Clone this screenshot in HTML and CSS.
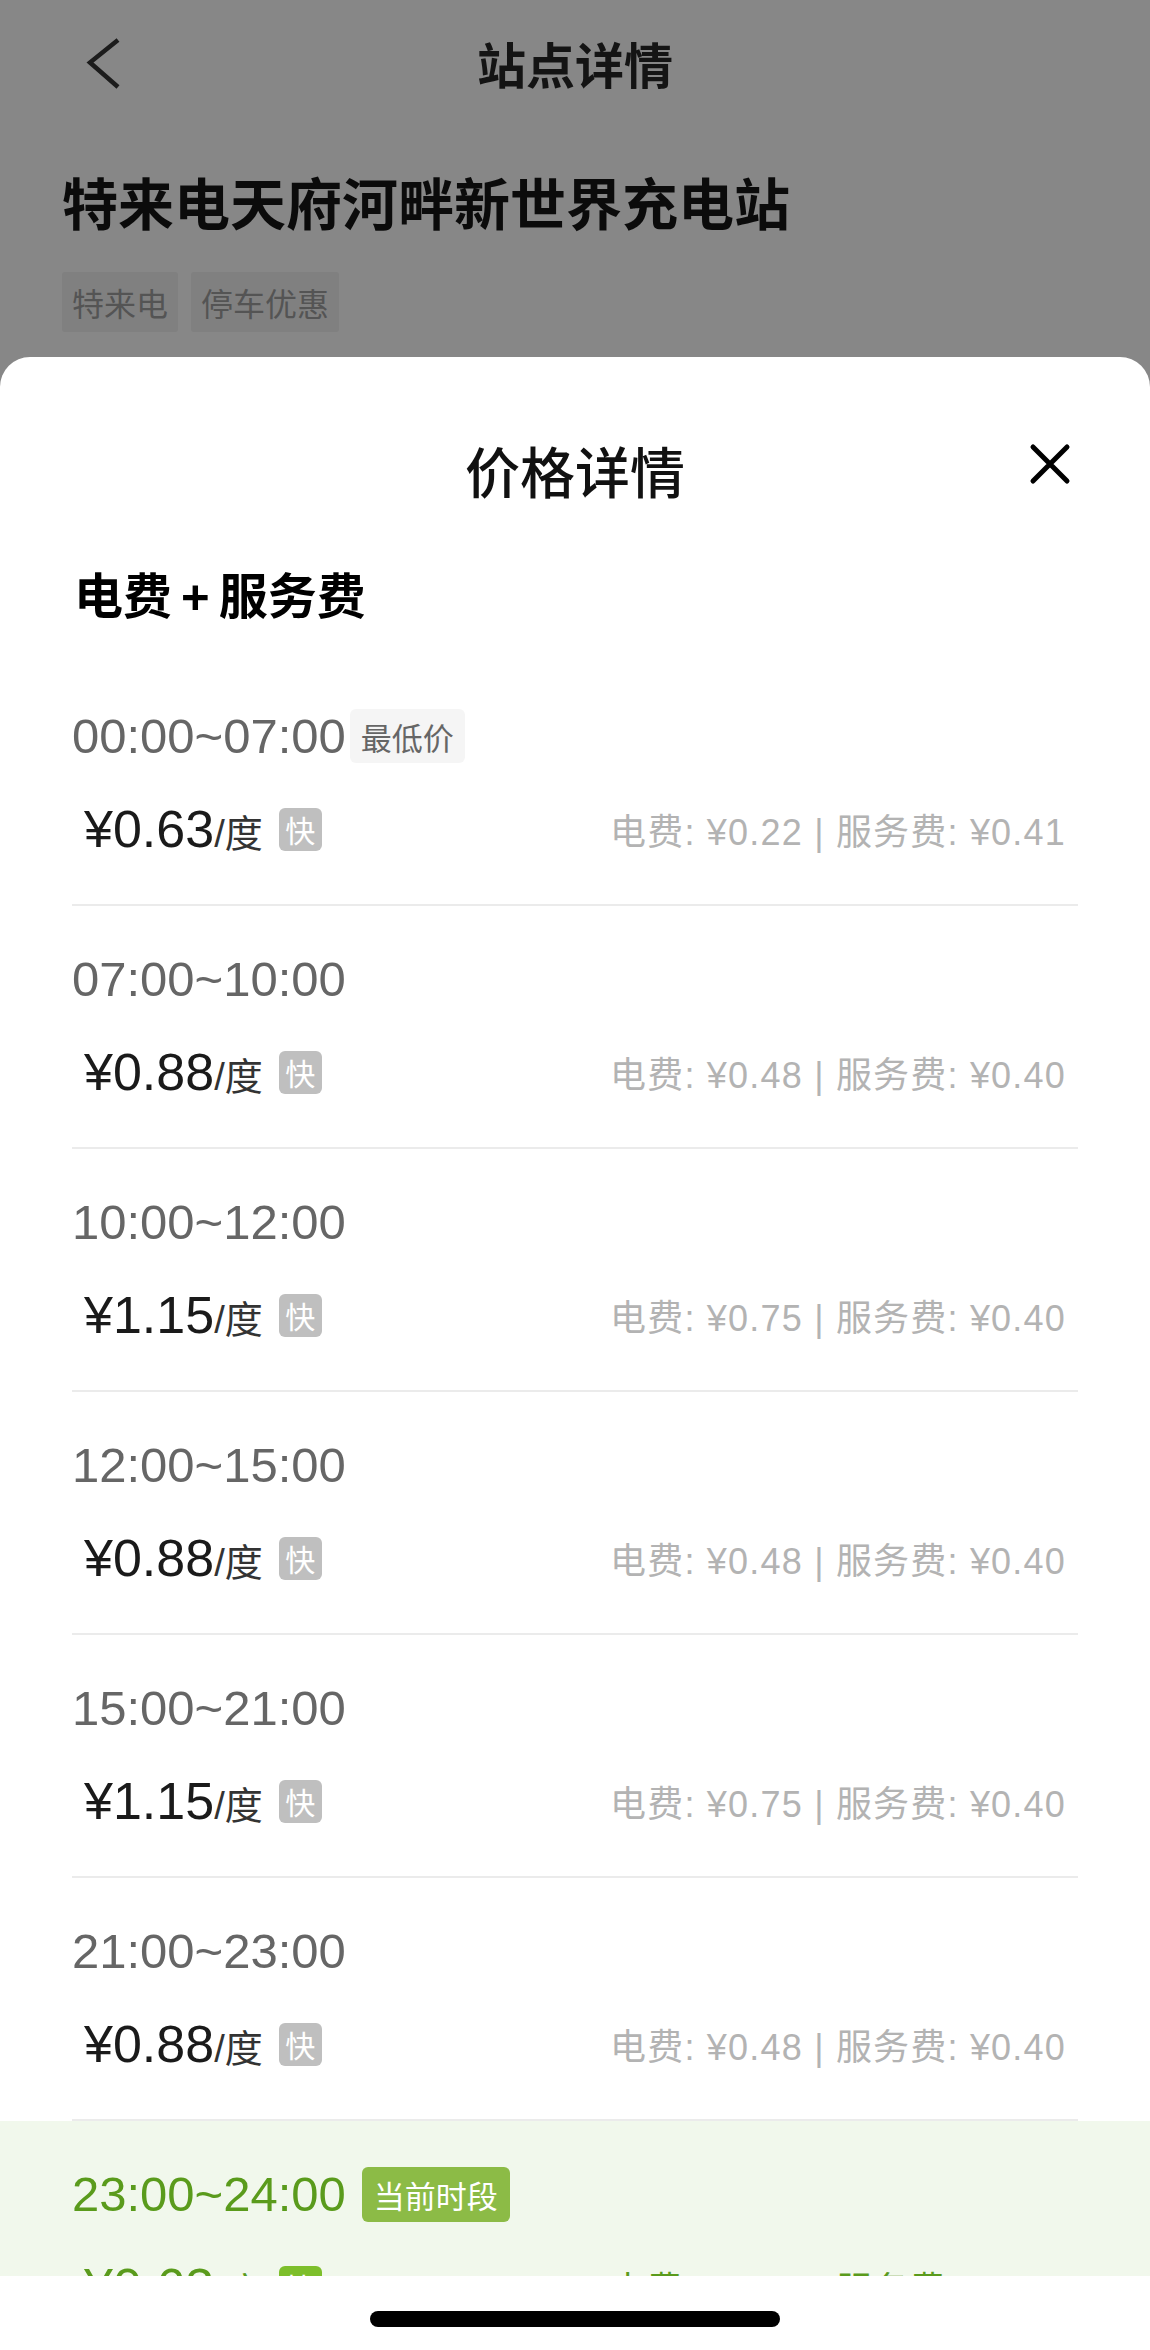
FILE: index.html
```html
<!DOCTYPE html>
<html lang="zh-CN">
<head>
    <meta charset="UTF-8">
    <meta name="viewport" content="width=device-width, initial-scale=1.0">
    <title>价格详情</title>
    <link rel="stylesheet" href="styles.css">
</head>
<body>
    <div class="page">
        <header class="station">
            <div class="nav">
                <span class="nav-back">
                    <svg width="40" height="56" viewBox="0 0 40 56"><polyline points="34,5 6,27.5 34,52" fill="none" stroke="#1c1c1c" stroke-width="4.5" stroke-linejoin="miter"/></svg>
                </span>
                <h1 class="nav-title">站点详情</h1>
                <span></span>
            </div>
            <h2 class="station-name">特来电天府河畔新世界充电站</h2>
            <div class="station-tags">
                <span class="station-tag">特来电</span>
                <span class="station-tag">停车优惠</span>
            </div>
        </header>

        <section class="sheet">
            <div class="sheet-head">
                <span></span>
                <h3 class="sheet-title">价格详情</h3>
                <button type="button" class="sheet-close">
                    <svg width="44" height="44" viewBox="0 0 44 44"><path d="M5 5 L39 39 M39 5 L5 39" stroke="#000" stroke-width="5" stroke-linecap="round"/></svg>
                </button>
            </div>
            <h4 class="fee-heading">电费<span class="plus">+</span>服务费</h4>

            <ul class="slots">
                <li class="slot">
                    <div class="slot-inner">
                        <div class="slot-time">00:00~07:00<span class="tag-low">最低价</span></div>
                        <div class="slot-price">
                            <div class="price"><span class="price-num">¥0.63</span><span class="price-unit">/度</span><span class="badge-fast">快</span></div>
                            <div class="price-detail">电费: ¥0.22 | 服务费: ¥0.41</div>
                        </div>
                    </div>
                </li>
                <li class="slot">
                    <div class="slot-inner">
                        <div class="slot-time">07:00~10:00</div>
                        <div class="slot-price">
                            <div class="price"><span class="price-num">¥0.88</span><span class="price-unit">/度</span><span class="badge-fast">快</span></div>
                            <div class="price-detail">电费: ¥0.48 | 服务费: ¥0.40</div>
                        </div>
                    </div>
                </li>
                <li class="slot">
                    <div class="slot-inner">
                        <div class="slot-time">10:00~12:00</div>
                        <div class="slot-price">
                            <div class="price"><span class="price-num">¥1.15</span><span class="price-unit">/度</span><span class="badge-fast">快</span></div>
                            <div class="price-detail">电费: ¥0.75 | 服务费: ¥0.40</div>
                        </div>
                    </div>
                </li>
                <li class="slot">
                    <div class="slot-inner">
                        <div class="slot-time">12:00~15:00</div>
                        <div class="slot-price">
                            <div class="price"><span class="price-num">¥0.88</span><span class="price-unit">/度</span><span class="badge-fast">快</span></div>
                            <div class="price-detail">电费: ¥0.48 | 服务费: ¥0.40</div>
                        </div>
                    </div>
                </li>
                <li class="slot">
                    <div class="slot-inner">
                        <div class="slot-time">15:00~21:00</div>
                        <div class="slot-price">
                            <div class="price"><span class="price-num">¥1.15</span><span class="price-unit">/度</span><span class="badge-fast">快</span></div>
                            <div class="price-detail">电费: ¥0.75 | 服务费: ¥0.40</div>
                        </div>
                    </div>
                </li>
                <li class="slot">
                    <div class="slot-inner">
                        <div class="slot-time">21:00~23:00</div>
                        <div class="slot-price">
                            <div class="price"><span class="price-num">¥0.88</span><span class="price-unit">/度</span><span class="badge-fast">快</span></div>
                            <div class="price-detail">电费: ¥0.48 | 服务费: ¥0.40</div>
                        </div>
                    </div>
                </li>
                <li class="slot slot-current">
                    <div class="slot-inner">
                        <div class="slot-time">23:00~24:00<span class="tag-current">当前时段</span></div>
                        <div class="slot-price">
                            <div class="price"><span class="price-num">¥0.63</span><span class="price-unit">/度</span><span class="badge-fast">快</span></div>
                            <div class="price-detail">电费: ¥0.22 | 服务费: ¥0.41</div>
                        </div>
                    </div>
                </li>
            </ul>

            <div class="home-bar"><span class="home-indicator"></span></div>
        </section>
    </div>
</body>
</html>
```

FILE: styles.css
```css
/* Reset */
* {
    margin: 0;
    padding: 0;
    box-sizing: border-box;
}

body {
    font-family: "Liberation Sans", "Noto Sans CJK SC", sans-serif;
    background: #878787;
    color: #111;
}

.page {
    width: 1150px;
    height: 2350px;
    overflow: hidden;
    display: flex;
    flex-direction: column;
}

/* Station header (dimmed behind the sheet) */
.station {
    height: 357px;
    flex: none;
}

.nav {
    height: 130px;
    padding-bottom: 4px;
    display: grid;
    grid-template-columns: 1fr auto 1fr;
    align-items: center;
}

.nav-back {
    padding-left: 84px;
    display: flex;
    align-items: center;
}

.nav-title {
    font-family: "Noto Sans CJK SC", sans-serif;
    font-size: 49px;
    font-weight: 600;
    color: #141414;
    line-height: 60px;
}

.station-name {
    margin: 36px 0 0 62px;
    font-family: "Noto Sans CJK SC", sans-serif;
    font-size: 56px;
    font-weight: 700;
    line-height: 70px;
    color: #0b0b0b;
}

.station-tags {
    display: flex;
    gap: 13px;
    margin: 36px 0 0 62px;
}

.station-tag {
    height: 60px;
    padding: 0 10px;
    display: flex;
    align-items: center;
    background: #808080;
    border-radius: 3px;
    font-family: "Noto Sans CJK SC", sans-serif;
    font-size: 32px;
    color: #545454;
}

/* Bottom sheet */
.sheet {
    flex: 1;
    min-height: 0;
    background: #fff;
    border-radius: 30px 30px 0 0;
    display: flex;
    flex-direction: column;
}

.sheet-head {
    padding-top: 82px;
    display: grid;
    grid-template-columns: 1fr auto 1fr;
    align-items: center;
}

.sheet-title {
    font-family: "Noto Sans CJK SC", sans-serif;
    font-size: 55px;
    font-weight: 500;
    line-height: 60px;
    color: #111;
}

.sheet-close {
    justify-self: end;
    align-self: start;
    margin: 3px 78px 0 0;
    width: 44px;
    height: 44px;
    border: none;
    background: none;
    display: flex;
}

.fee-heading {
    margin: 64px 0 0 74px;
    font-family: "Noto Sans CJK SC", sans-serif;
    font-size: 49px;
    font-weight: 700;
    line-height: 60px;
    color: #000;
}

.plus {
    font-family: "Liberation Sans", sans-serif;
    margin: 0 9px;
}

/* Time slots */
.slots {
    list-style: none;
    margin-top: 36px;
    flex: 1;
    min-height: 0;
    overflow: hidden;
}

.slot {
    padding: 0 72px;
}

.slot-inner {
    padding: 46px 0 48px;
    border-bottom: 2px solid #ebebeb;
}

.slot-time {
    height: 54px;
    display: flex;
    align-items: center;
    font-size: 49px;
    color: #666;
}

.tag-low {
    margin-left: 4px;
    height: 54px;
    padding: 0 11px;
    display: flex;
    align-items: center;
    background: #f5f5f5;
    border-radius: 6px;
    font-family: "Noto Sans CJK SC", sans-serif;
    font-size: 31px;
    color: #666;
}

.slot-price {
    margin-top: 39px;
    height: 54px;
    padding: 0 12px;
    display: flex;
    align-items: center;
    justify-content: space-between;
}

.price {
    display: flex;
    align-items: baseline;
}

.price-num {
    font-size: 52px;
    font-weight: 500;
    color: #1a1a1a;
}

.price-unit {
    font-size: 38px;
    color: #333;
}

.badge-fast {
    align-self: center;
    margin-left: 16px;
    width: 43px;
    height: 43px;
    display: flex;
    align-items: center;
    justify-content: center;
    background: #bfbfbf;
    border-radius: 6px;
    font-family: "Noto Sans CJK SC", sans-serif;
    font-size: 30px;
    color: #fff;
}

.price-detail {
    font-size: 36px;
    letter-spacing: 1.2px;
    color: #b3b3b3;
}

/* Current slot highlight */
.slot-current {
    background: #f1f8ec;
}

.slot-current .slot-time,
.slot-current .price-num,
.slot-current .price-unit,
.slot-current .price-detail {
    color: #5a9b1c;
}

.tag-current {
    margin-left: 16px;
    height: 55px;
    padding: 0 12px;
    display: flex;
    align-items: center;
    background: #8cbb46;
    border-radius: 6px;
    font-family: "Noto Sans CJK SC", sans-serif;
    font-size: 31px;
    color: #fff;
}

.slot-current .badge-fast {
    background: #7dbf2b;
}

/* Home indicator */
.home-bar {
    height: 74px;
    flex: none;
    background: #fff;
    display: flex;
    justify-content: center;
    padding-top: 35px;
}

.home-indicator {
    width: 410px;
    height: 16px;
    border-radius: 8px;
    background: #000;
}
```
